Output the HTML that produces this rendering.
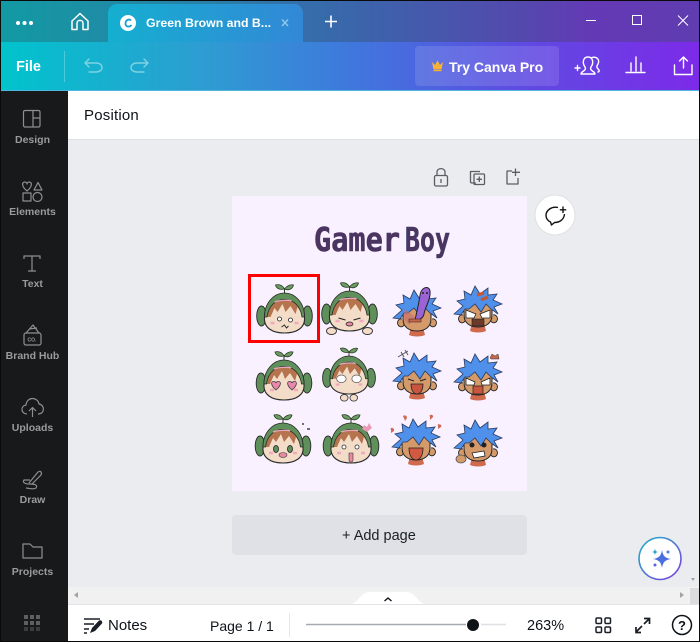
<!DOCTYPE html>
<html><head><meta charset="utf-8"><style>
html,body{margin:0;padding:0;background:#000}
#r{position:relative;width:700px;height:643px;overflow:hidden;background:#ebecf0;font-family:"Liberation Sans",sans-serif}
#r div{position:absolute;box-sizing:border-box}
#r svg{position:absolute;left:0;top:0}
.l{left:0;width:65px;text-align:center;color:#9b9b9d;font-size:10.5px;font-weight:bold;line-height:12px;white-space:nowrap}
.t{white-space:nowrap;line-height:18px}
</style></head><body><div id="r">
<div style="left:0;top:41px;width:700px;height:50px;background:linear-gradient(90deg,#00c4cc 0%,#2f9bd2 30%,#3f78dd 50%,#5f4ae2 75%,#7d2ae8 100%)"></div>
<div style="left:0;top:0;width:700px;height:42px;background:linear-gradient(90deg,#129aa3 0%,#2a7fa8 30%,#3a66ab 50%,#5448ad 75%,#6439b5 85%,#5f3cb0 100%)"></div>
<div style="left:108px;top:4px;width:195px;height:38px;border-radius:9px 9px 0 0;background:linear-gradient(90deg,#15afd0,#3388d6)"></div>
<div style="left:415px;top:46px;width:144px;height:40px;border-radius:4px;background:rgba(255,255,255,.12)"></div>
<div style="left:68px;top:91px;width:632px;height:49px;background:#fff;border-bottom:1px solid #dfe0e4"></div>
<div style="left:0;top:91px;width:68px;height:552px;background:#18191b"></div>
<div style="left:0;top:90px;width:700px;height:1px;background:#4fb6dc"></div>
<div style="left:232px;top:196px;width:295px;height:295px;background:#f9f1ff"></div>
<div style="left:232px;top:515px;width:295px;height:40px;border-radius:4px;background:#dfe1e6"></div>
<div style="left:690px;top:140px;width:10px;height:447px;background:#ebecf0"></div>
<div style="left:68px;top:587px;width:632px;height:17px;background:#f1f1f2"></div>
<div style="left:68px;top:604px;width:632px;height:38px;background:#fff;border-top:1px solid #e2e3e6"></div>

<div class="t" style="left:16px;top:58px;color:#fff;font-weight:bold;font-size:14.5px">File</div>
<div class="t" style="left:146px;top:14px;color:#fff;font-weight:bold;font-size:12.3px;width:126px;overflow:hidden">Green Brown and B...</div>
<div class="t" style="left:449px;top:58px;color:#fff;font-weight:bold;font-size:14px">Try Canva Pro</div>
<div class="t" style="left:84px;top:107px;color:#0e1318;font-size:15px;letter-spacing:.2px">Position</div>
<div class="t" style="left:342px;top:527px;color:#1a1f26;font-size:14.5px">+ Add page</div>
<div class="t" style="left:108px;top:617px;color:#0e1318;font-size:15px">Notes</div>
<div class="t" style="left:210px;top:617px;color:#0e1318;font-size:14px">Page 1 / 1</div>
<div class="t" style="left:527px;top:617px;color:#0e1318;font-size:14.5px">263%</div>

<div class="l" style="top:134px">Design</div>
<div class="l" style="top:206px">Elements</div>
<div class="l" style="top:278px">Text</div>
<div class="l" style="top:350px">Brand Hub</div>
<div class="l" style="top:422px">Uploads</div>
<div class="l" style="top:494px">Draw</div>
<div class="l" style="top:566px">Projects</div>

<svg width="700" height="643" viewBox="0 0 700 643">
<defs>
<linearGradient id="rg" x1="0" y1="0" x2="1" y2="1"><stop offset="0" stop-color="#1fb3c8"/><stop offset="1" stop-color="#7d3ae0"/></linearGradient>
<g id="sp">
 <path d="M0,-19V-25" fill="none" stroke="#2c3a26" stroke-width="1"/>
 <path d="M0,-24C-2,-28 -6,-29 -9,-28C-8,-24 -4,-23 0,-24Z" fill="#6b9c62" stroke="#2c3a26" stroke-width=".8"/>
 <path d="M0,-24C2,-27 6,-29 9,-28C8,-24 4,-22 0,-24Z" fill="#6b9c62" stroke="#2c3a26" stroke-width=".8"/>
 <ellipse cx="-23" cy="3" rx="4.800" ry="10" fill="#5f8f5a" stroke="#2a2a2a" stroke-width=".9"/>
 <ellipse cx="23" cy="3" rx="4.800" ry="10" fill="#5f8f5a" stroke="#2a2a2a" stroke-width=".9"/>
 <path d="M-20,4C-20,-10 -10,-17 0,-17C10,-17 20,-10 20,4C21,15 12,20 0,20C-12,20 -21,15 -20,4Z" fill="#f3dcc8" stroke="#2a2a2a" stroke-width="1.100"/>
 <path d="M-18,4C-18,-8 -8,-14 0,-14C8,-14 18,-8 18,2L13,-6L11,1L6,-7L1,-1L-2,-9L-7,-1L-10,-5L-14,4Z" fill="#b5734e"/>
 <path d="M-20,4C-20,-11 -10,-20 0,-20C10,-20 20,-11 20,4L17.500,4C16,-7 9,-13.500 0,-13.500C-9,-13.500 -16,-7 -17.500,4Z" fill="#5f8f5a" stroke="#2a2a2a" stroke-width=".8"/>
 <path d="M-10,-11C-5,-13 5,-13 7,-12" fill="none" stroke="#eba6bf" stroke-width="1.300"/>
 <path d="M-14,10h4M10,10h4" stroke="#f2a9bd" stroke-width="2.500"/>
</g>
<g id="bl">
 <path d="M-15,8a3.500,4 0 1 0 2,6M15,8a3.500,4 0 1 1 -2,6" fill="#d49a6a" stroke="#222" stroke-width=".9"/>
 <path d="M-6,16h12l2,8c-4,2 -12,2 -16,0Z" fill="#cf6a4f"/>
 <path d="M-14,0C-14,-6 14,-6 14,0L14,8C14,16 8,20 0,20C-8,20 -14,16 -14,8Z" fill="#d49a6a" stroke="#222" stroke-width="1"/>
 <path d="M-24,7L-15,-1L-21,-6L-13,-8L-14,-16L-7,-12L-3,-21L2,-13L10,-19L10,-12L19,-13L15,-7L24,-3L16,0L20,7L13,2L8,-3L3,5L-3,-3L-9,2L-13,2L-17,8Z" fill="#4f90ea" stroke="#2a3a5c" stroke-width=".8"/>
</g>
</defs>

<!-- tab row -->
<g fill="#fff"><circle cx="18" cy="23" r="2"/><circle cx="24.500" cy="23" r="2"/><circle cx="31" cy="23" r="2"/></g>
<path d="M72,21L80,13.500L88,21V29.500H83V23C83,19.500 77,19.500 77,23V29.500H72Z" fill="none" stroke="#fff" stroke-width="1.500" stroke-linejoin="round"/>
<circle cx="128" cy="23" r="8" fill="#fff"/><path d="M131,20.500C129,18.500 125.500,20 125.500,23.500C125.500,27 129.500,27.500 131.500,25" fill="none" stroke="#1a9fd2" stroke-width="1.800"/>
<path d="M282,19.500L288,26M288,19.500L282,26" stroke="#8fc6ea" stroke-width="1.500"/>
<path d="M331,15.500V27.500M325,21.500H337" stroke="#fff" stroke-width="1.600"/>
<path d="M586,20.500H596" stroke="#fff" stroke-width="1"/>
<rect x="632.500" y="15.500" width="9" height="9" fill="none" stroke="#fff" stroke-width="1"/>
<path d="M678,15.500L688,25.500M688,15.500L678,25.500" stroke="#fff" stroke-width="1"/>
<!-- toolbar -->
<path d="M64.500,51V82" stroke="#fff" stroke-opacity=".25"/>
<g fill="none" stroke="#7fd2e4" stroke-width="1.400" stroke-linecap="round" stroke-linejoin="round">
<path d="M89,59L85,63L89,67M85,63H96C104,63 104,72 96,72H89"/>
<path d="M144,59L148,63L144,67M148,63H137C129,63 129,72 137,72H144"/>
</g>
<path d="M432,62L435,65L437.500,60.500L440,65L443,62L441.500,69.500H433.500Z" fill="#fbb331"/><rect x="433.500" y="70" width="8" height="1.200" fill="#fbb331"/>
<g fill="none" stroke="#fff" stroke-width="1.400" stroke-linecap="round" stroke-linejoin="round">
<path d="M575,68H580M577.500,65.500V70.500" />
<path d="M581,74C581,71 587,71 585,67C582,63 583,57 588,57C593,57 594,63 591,67C589,71 595,71 595,74Z"/>
<path d="M592,57.500C597,56 600,60 598,64C596,67 597,68 599,70C599.500,71 599,72 598,72"/>
<path d="M626,72.500H645M631,71V63M636,71V57M641,71V63"/>
<path d="M674.500,65V74.500H692V65M683.500,68V57.500M679.500,61L683.500,57L687.500,61"/>
</g>

<!-- sidebar icons -->
<g fill="none" stroke="#8f8f91" stroke-width="1.200" stroke-linejoin="round">
<rect x="23.500" y="110.500" width="16.500" height="16.500" rx="1.500"/><path d="M33,110.500V127M33,118H40"/>
<path d="M27,191C21,186 22,182 25,182C26,182 27,183 27,184C27,183 28,182 29,182C32,182 33,186 27,191Z"/>
<path d="M38,182.500L42,190H34Z"/><rect x="23" y="193" width="8" height="8"/><circle cx="37.500" cy="197" r="4.500"/>
<path d="M24,259V256H40V259M32,256V271M28,271H36"/>
<rect x="24" y="333" width="17" height="12" rx="2"/><path d="M26,333L33,325L39,333M29,329L37,328"/>
<path d="M27,414C21,414 20,406 26,405C27,396 38,397 39,404C45,405 45,414 38,414M32.500,417V408M29,411L32.500,407.500L36,411"/>
<path d="M29,483L38,472C41,470 42,473 41,475L32,484M30,480H24C22,483 26,484 30,484C35,484 38,485 36,488C34,490 28,488 26,488"/>
<path d="M23,544H30L33,547H42V558H23Z"/>
</g>
<text x="27.500" y="341.500" font-size="5" font-weight="bold" fill="#9b9b9d" font-family="Liberation Sans">CO.</text>
<g fill="#5e5f61"><rect x="24" y="615" width="4" height="4"/><rect x="30" y="615" width="4" height="4"/><rect x="36" y="615" width="4" height="4"/><rect x="24" y="621" width="4" height="4"/><rect x="30" y="621" width="4" height="4"/><rect x="36" y="621" width="4" height="4"/><rect x="24" y="627" width="4" height="4" fill="#3c3d3f"/><rect x="30" y="627" width="4" height="4" fill="#3c3d3f"/><rect x="36" y="627" width="4" height="4" fill="#3c3d3f"/></g>

<!-- page tools -->
<g fill="none" stroke="#5a5f66" stroke-width="1.300" stroke-linejoin="round">
<rect x="434.500" y="175.500" width="13" height="10.500" rx="1.500"/><path d="M437,175.500V172C437,167.500 445,167.500 445,172V175.500"/><path d="M441,179V183"/>
<path d="M476,183H472C471,183 470.500,182.500 470.500,181.500V171.500H480"/><rect x="474" y="174" width="10.500" height="10.500" rx="1"/><path d="M479.300,176.500V182M476.500,179.300H482"/>
<path d="M512,171H507V184H518V178"/><path d="M515.500,168.500V176M512,172.300H520"/>
</g>
<circle cx="555" cy="215" r="20" fill="#fff" stroke="#e0e0e4"/>
<path d="M558,207.500C552,206 546,210 546,215.500C546,218.500 548,221 550.500,222L551.500,225L554.500,222.500C559,222.500 564,220 564.500,214" fill="none" stroke="#111" stroke-width="1.400" stroke-linejoin="round"/>
<path d="M563,206.500V213M559.800,209.800H566.200" stroke="#111" stroke-width="1.400"/>

<!-- title -->
<g font-family="DejaVu Sans Mono" font-weight="bold" font-size="33" lengthAdjust="spacingAndGlyphs">
<text x="313.500" y="251" textLength="87" lengthAdjust="spacingAndGlyphs" fill="#c58a9a">Gamer</text>
<text x="404.500" y="251" textLength="46" lengthAdjust="spacingAndGlyphs" fill="#8ac0e8">Boy</text>
<text x="314" y="251" textLength="86" lengthAdjust="spacingAndGlyphs" fill="#4a3460" stroke="#4a3460" stroke-width=".5">Gamer</text>
<text x="405" y="251" textLength="45" lengthAdjust="spacingAndGlyphs" fill="#4a3460" stroke="#4a3460" stroke-width=".5">Boy</text>
</g>

<rect x="249.500" y="275.500" width="69" height="66" fill="none" stroke="#f00" stroke-width="3"/>

<!-- sprout heads -->
<g transform="translate(284.500,313)"><use href="#sp"/><circle cx="-5" cy="6" r="2" fill="#fff" stroke="#222" stroke-width=".8"/><circle cx="6" cy="7" r="2" fill="#fff" stroke="#222" stroke-width=".8"/><path d="M-3,14L0,12L2,15L4,13" fill="none" stroke="#222" stroke-width=".9"/></g>
<g transform="translate(349.500,311)"><use href="#sp"/><path d="M-11,7L-4,9M4,9L11,7" stroke="#222" stroke-width="1.100"/><ellipse cx="0" cy="13" rx="3.500" ry="2" fill="#e88aa3" stroke="#222" stroke-width=".7"/><ellipse cx="-18" cy="20" rx="5" ry="3.500" fill="#f3dcc8" stroke="#333" stroke-width=".9"/><ellipse cx="18" cy="20" rx="5" ry="3.500" fill="#f3dcc8" stroke="#333" stroke-width=".9"/></g>
<g transform="translate(284,380)"><use href="#sp"/><path d="M-8,10C-14,5 -13,1 -10,1.500C-9,1.500 -8,2.500 -8,3C-8,2.500 -7,1.500 -6,1.500C-3,1 -2,5 -8,10ZM8,10C2,5 3,1 6,1.500C7,1.500 8,2.500 8,3C8,2.500 9,1.500 10,1.500C13,1 14,5 8,10Z" fill="#e887ad" stroke="#333" stroke-width=".7"/></g>
<g transform="translate(349,375) scale(.95)"><use href="#sp"/><ellipse cx="-8" cy="4" rx="5" ry="4" fill="#fff" stroke="#555" stroke-width=".8"/><ellipse cx="8" cy="4" rx="5" ry="4" fill="#fff" stroke="#555" stroke-width=".8"/><ellipse cx="-5" cy="24" rx="4" ry="3.500" fill="#f3dcc8" stroke="#333" stroke-width=".9"/><ellipse cx="5" cy="24" rx="4" ry="3.500" fill="#f3dcc8" stroke="#333" stroke-width=".9"/></g>
<g transform="translate(283,443)"><use href="#sp"/><ellipse cx="-7" cy="6" rx="2.500" ry="3.500" fill="#5f8f5a" stroke="#222" stroke-width=".8"/><ellipse cx="7" cy="6" rx="2.500" ry="3.500" fill="#5f8f5a" stroke="#222" stroke-width=".8"/><ellipse cx="0" cy="12" rx="4" ry="2.500" fill="#e88aa3" stroke="#333" stroke-width=".6"/><path d="M19,-19h2M24,-14h3" stroke="#444" stroke-width="1.500"/></g>
<g transform="translate(351,443)"><use href="#sp"/><circle cx="-7" cy="4" r="2" fill="#fff" stroke="#333" stroke-width=".8"/><circle cx="6" cy="4" r="2" fill="#fff" stroke="#333" stroke-width=".8"/><path d="M-2,10h4v7a2,2 0 0 1 -4,0Z" fill="#e88aa3" stroke="#333" stroke-width=".6"/><path d="M11,-14L13,-18L16,-16L18,-20L21,-15L16,-11Z" fill="#eb9ab5"/></g>

<!-- blue boys -->
<g transform="translate(417,311)"><use href="#bl"/><path d="M-12,-2L-2,6L-8,14L-14,7Z" fill="#c96a6a" opacity=".6"/><path d="M3,-16C4,-24 12,-26 13,-20C14,-12 8,-4 7,3C6,8 0,10 -2,9C0,0 2,-8 3,-16Z" fill="#9b63d3" stroke="#222" stroke-width="1"/><circle cx="6" cy="-18" r="1" fill="#222"/><circle cx="10" cy="-18" r="1" fill="#222"/><rect x="-8" y="8" width="12" height="3" fill="#c8654a" stroke="#222" stroke-width=".5"/></g>
<g transform="translate(478,307)"><use href="#bl"/><path d="M-12,3L-2,7L-4,11H-12ZM12,3L2,7L4,11H12Z" fill="#fff" stroke="#222" stroke-width=".8"/><rect x="-6" y="12" width="12" height="7" fill="#6a3a2a" stroke="#222" stroke-width=".6"/><path d="M-1,-12L6,-14M3,-7L10,-10" stroke="#c8552f" stroke-width="3"/></g>
<g transform="translate(417,374)"><use href="#bl"/><path d="M-9,5L-3,7M3,7L9,5" stroke="#222"/><path d="M-6,10H6C6,18 2,20 0,20C-2,20 -6,18 -6,10Z" fill="#c8553f" stroke="#222" stroke-width=".8"/><path d="M-19,-17L-9,-23M-16,-22L-13,-17M-12,-24L-9,-19" stroke="#555" stroke-width="1"/></g>
<g transform="translate(478,375)"><use href="#bl"/><path d="M-12,3L-3,7L-4,10H-12ZM12,3L3,7L4,10H12Z" fill="#fff" stroke="#222" stroke-width=".8"/><path d="M-5,11H5V19H-5Z" fill="#c8553f" stroke="#222" stroke-width=".7"/><path d="M12,-17L14,-21L17,-19L20,-21L21,-16H13Z" fill="#c8654a" stroke="#333" stroke-width=".5"/></g>
<g transform="translate(416,440)"><use href="#bl"/><path d="M-7,8H7C7,17 3,20 0,20C-3,20 -7,17 -7,8Z" fill="#d25a42" stroke="#222" stroke-width=".8"/><path d="M-12,-22c-3,-3 3,-4 3,0l-2,3zM14,-23c-2,-3 4,-3 3,0l-3,3zM-25,-10c-2,-3 4,-3 3,1l-3,2zM22,-14c-2,-3 5,-2 3,1l-3,2z" fill="#cf6a55"/></g>
<g transform="translate(478,441)"><use href="#bl"/><circle cx="-6" cy="4" r="2.500" fill="#222"/><circle cx="6" cy="4" r="2.500" fill="#222"/><path d="M-6,12L6,10L7,15L-4,17Z" fill="#fff" stroke="#222" stroke-width=".8"/><ellipse cx="-17" cy="18" rx="5" ry="4" fill="#d49a6a" stroke="#555" stroke-width=".8"/></g>

<!-- ai button -->
<circle cx="660" cy="558.500" r="21" fill="#fff" stroke="url(#rg)" stroke-width="1.600"/>
<path d="M662,550C663,556 665,558 671,559C665,560 663,562 662,568C661,562 659,560 653,559C659,558 661,556 662,550Z" fill="#4c6fe0"/>
<path d="M655,548.500C655.500,551 656,551.500 658,552C656,552.500 655.500,553 655,555C654.500,553 654,552.500 652,552C654,551.500 654.500,551 655,548.500Z" fill="#2ba5d0"/>
<circle cx="668" cy="552" r="1.500" fill="#4c80e0"/><circle cx="655" cy="565" r="1.500" fill="#5a60e0"/>

<!-- scrollbars -->
<path d="M78,592V598L74,595Z" fill="#a3a3a5"/><path d="M680,592V598L684,595Z" fill="#a3a3a5"/><path d="M695,578H691L693,581Z" fill="#a3a3a5"/>
<path d="M350,604C358,604 360,592 370,592H406C416,592 418,604 426,604Z" fill="#fff"/>
<path d="M384.500,601L388,598L391.500,601" fill="none" stroke="#0e1318" stroke-width="1.400"/>
<rect x="690" y="588" width="10" height="16" fill="#dcdcdf"/>

<!-- bottom bar -->
<g fill="none" stroke="#1a1f26" stroke-width="1.500"><path d="M84,619H100M84,624H94M84,629H89M84,633H87"/></g>
<path d="M90,633L92,628L99,620.500C101,619.500 103,621.500 102,623.500L95,631Z" fill="#1a1f26"/>
<path d="M289.500,613V637" stroke="#e5e6e9"/>
<path d="M306,624.500H466" stroke="#a6a9b2" stroke-width="1.500"/><path d="M481,624.500H506" stroke="#dfe0e6" stroke-width="1.500"/>
<circle cx="473" cy="625" r="6" fill="#0e1318"/>
<g fill="none" stroke="#1a1f26" stroke-width="1.500"><rect x="596" y="618" width="5.500" height="5.500" rx="1.200"/><rect x="605" y="618" width="5.500" height="5.500" rx="1.200"/><rect x="596" y="627" width="5.500" height="5.500" rx="1.200"/><rect x="605" y="627" width="5.500" height="5.500" rx="1.200"/>
<path d="M636,632L642,626M636,627V632.500H641M649,619L644,624M644,618.500H649.500V624" stroke-width="1.700"/>
<circle cx="682" cy="625" r="9.500" stroke="#0e1318"/></g>
<text x="682" y="630" text-anchor="middle" font-family="Liberation Sans" font-weight="bold" font-size="13" fill="#0e1318">?</text>
<path d="M0,641.500H700M699.500,0V643M0,.5H700M.5,0V643" stroke="#0a0a0a" fill="none"/>
<rect x="0" y="642" width="700" height="1" fill="#fff"/>
</svg>
</div></body></html>
